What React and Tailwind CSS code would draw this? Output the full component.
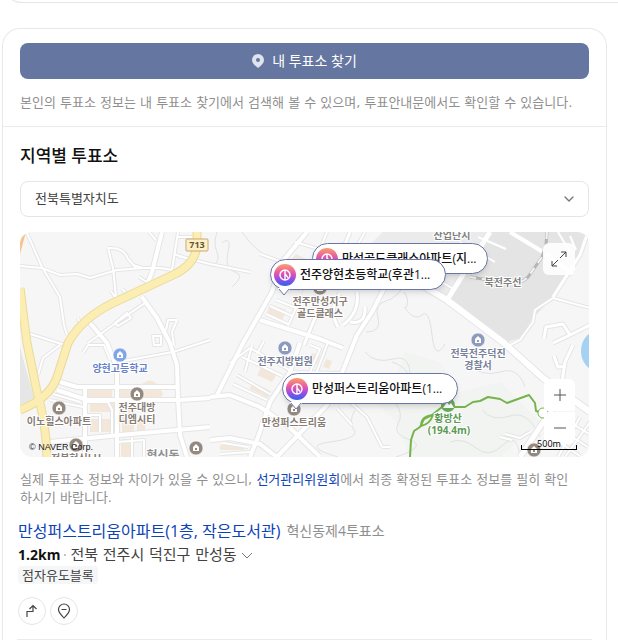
import { ChevronDown } from 'lucide-react';

// [path, width]
const roads = [
  ['M7 1 22 35 40 65 44 93 47 103', 2],
  ['M0 34 22 36 40 43 57 42 70 46 97 38 123 36 140 36 153 38', 2],
  ['M88 16Q104 15 108 27L116 36', 2],
  ['M88 16 93 36 96 65M91 59 97 68M102 57 112 66M119 45 130 52M113 33 123 36', 2],
  ['M142 0 132 40 127 53', 4],
  ['M129 0 136 8M158 0 152 38', 2],
  ['M158 24 190 32 230 40M158 5H182M154 22 166 26', 2],
  ['M122 65 137 86 150 111 157 133 158 166 160 203 167 225', 4],
  ['M125 71 100 88 68 111M95 91 107 81 111 86 98 94ZM58 86 62 96', 2],
  ['M70 91 87 111 97 136 97 225', 4],
  ['M157 88 152 100 154 113M157 88H148L146 98M133 104H141V113H134Z', 2],
  ['M7 101 45 113M40 113 23 126 18 143', 2],
  ['M40 150 57 155H157', 4],
  ['M37 158 67 168H160L190 166', 4],
  ['M30 168 63 175M33 162 60 170', 2],
  ['M65 153V225', 4],
  ['M30 210 100 203 190 195', 4],
  ['M98 130 153 120 190 108M68 113 63 121M68 113H84L90 128', 2],
  ['M67 183H80V200M67 170H88L92 178V202M112 206V225M98 210 124 208V225', 2],
  ['M287 0 262 30 252 60 223 111 207 143 197 163', 4],
  ['M262 30 240 22M275 10 330 26 345 0M307 0 290 42 280 60', 2],
  ['M300 20 330 32M330 0 318 30', 3],
  ['M240 88 268 97 300 107 323 116', 4],
  ['M297 61Q300 78 292 93L284 113M320 61Q308 78 318 95', 3],
  ['M337 60Q340 80 323 93M345 75Q346 93 330 90', 3],
  ['M370 45 352 80 337 103 322 141 307 173 257 225', 4],
  ['M190 165 210 163 240 175 267 193 300 225', 4],
  ['M190 208 210 206 240 212 257 225', 4],
  ['M280 111 270 140 250 170 238 205 230 225', 4],
  ['M210 131 230 116 273 140 320 141M222 125 262 144M217 143 250 162M213 152 247 168', 2],
  ['M250 74 272 84M246 82 268 92M256 68 276 76 268 94M290 113 300 117 290 140M308 110 296 142', 2],
  ['M232 113 225 140M244 109 237 122M203 211 228 215M200 222 230 220', 2],
  ['M330 170 347 185 362 215M317 176 332 193M362 215H370', 2],
  ['M470 0 427 68', 5],
  ['M490 0 523 20 553 42', 4],
  ['M458 5 486 17M440 10 475 30M405 40 435 58M420 25 450 42', 2],
  ['M568 0 560 23 533 65', 3],
  ['M570 76 533 66 515 78 513 90 500 108 490 113', 2],
  ['M570 93 550 103 533 111M550 103 543 92 526 95 524 106', 3],
  ['M538 0 550 20M550 4 556 18', 2],
  ['M340 15 390 46 427 68 484 111 523 146 570 180', 6],
  ['M553 113 545 130 542 150M534 124 538 135 546 134', 3],
  ['M540 165 520 195 500 225', 5],
  ['M570 190 545 225M560 185 538 225M536 195 568 215M530 204 560 224M543 186 569 202', 2],
  ['M485 202 500 206 510 200M480 205 492 208', 2],
];

const contours = [
  'M197 0Q193 12 197 20T192 35',
  'M202 11Q212 3 208 20T215 40T212 55',
  'M222 0Q230 12 238 18T250 27',
  'M390 45Q378 66 366 69T358 86T346 100',
  'M384 75Q395 90 402 83T412 103T425 112',
  'M345 120Q355 132 373 127T390 146T417 150',
  'M335 178Q328 190 334 198T310 210T318 225',
  'M372 130Q385 134 389 144T410 142',
  'M375 170Q384 182 378 192T390 208T376 225',
  'M445 130Q462 146 480 140T505 155',
  'M462 178Q472 190 490 184T520 205',
  'M430 210Q443 205 456 216T483 213T500 225',
  'M384 60Q390 68 386 76',
];

const blocks = [
  'M67 157H92V166H67Z',
  'M100 157H139Q145 160 141 166H100ZM122 152Q130 145 137 152Z',
  'M70 171H94V180H70ZM70 187H94V200H70Z',
  'M102 172H114V201H102ZM117 190H125V201H117Z',
  'M101 207H111V225H101Z',
  'M250 72 266 78 262 90 246 84Z',
  'M262 38 276 22 288 28 276 44Z',
  'M241 135 257 142 252 150 237 143ZM232 150 251 159 248 166 230 157Z',
  'M292 121 300 124 297 132 289 129ZM306 127 312 129 309 137 303 135Z',
  'M200 213H224V218H200Z',
];

const places = [
  { x: 100, y: 123, tone: '#82a5ea', ink: '#6681c9', lines: ['양현고등학교'] },
  { x: 117, y: 162, tone: '#948980', ink: '#877d76', lines: ['전주대방', '디엠시티'] },
  { x: 39, y: 176, tone: '#948980', ink: '#877d76', lines: ['이노힐스아파트'] },
  { x: 56, y: 213, tone: '#948980', ink: '#877d76', lines: ['전북혁신LH'] },
  { x: 176, y: 216, tone: '#948980', ink: '#877d76', lines: [] },
  { x: 300, y: 56, tone: '#948980', ink: '#877d76', lines: ['전주만성지구', '골드클래스'] },
  { x: 265, y: 116, tone: '#8d9abd', ink: '#788199', lines: ['전주지방법원'] },
  { x: 274, y: 177, tone: '#948980', ink: '#877d76', lines: ['만성퍼스트리움'] },
  { x: 458, y: 108, tone: '#8d9abd', ink: '#788199', lines: ['전북전주덕진', '경찰서'] },
  { x: 514, y: 218, tone: '#948980', ink: '#877d76', lines: [] },
];

const pins = [
  { label: '만성골드클래스아파트(지...', place: 'left-[292px] top-[11px]' },
  { label: '전주양현초등학교(후관1...', place: 'left-[250px] top-[27px]' },
  { label: '만성퍼스트리움아파트(1...', place: 'left-[262px] top-[141px]' },
];

const MapCanvas = () => (
  <svg
    className="block h-full w-full font-bold"
    viewBox="0 0 569 225"
    preserveAspectRatio="xMinYMin slice"
    aria-hidden="true"
  >
    <rect width="569" height="225" fill="#f6f6f6" />
    <path d="M0 115 4 130 14 166 0 173Z" fill="#e6e6e6" />
    <path d="M363 0H470L427 68 390 46 340 22Z" fill="#ebebeb" />
    <path d="M470 0H569L560 23 533 65 513 86 500 106 487 110 427 68Z" fill="#e4e4e4" />
    <path d="M385 120Q378 150 350 165L376 190 390 225H480L520 190 480 150 440 160 420 130Z" fill="#f1f4f0" />
    <ellipse cx="578" cy="119" rx="17" ry="20" fill="#a5d2f3" />
    {blocks.map((d) => (
      <path key={d} d={d} fill="#f3e7da" />
    ))}
    <g fill="none" stroke="#e0e1e0" strokeWidth="1">
      {contours.map((d) => (
        <path key={d} d={d} />
      ))}
    </g>

    {/* road casing first, then the white surface */}
    <g fill="none" stroke="#e5e5e5" strokeLinejoin="round">
      {roads.map(([d, w]) => (
        <path key={d} d={d} strokeWidth={w + 2} />
      ))}
    </g>
    <g fill="none" stroke="#fff" strokeLinejoin="round">
      {roads.map(([d, w]) => (
        <path key={d} d={d} strokeWidth={w} />
      ))}
    </g>

    {/* highways */}
    <path d="M0 0H6L0 22Z" fill="#f6c48c" />
    <g fill="none" strokeLinejoin="round">
      <g stroke="#e9da9c" strokeWidth="9">
        <path d="M177 0V14Q175 33 153 43L93 71Q62 86 48 111L37 145Q30 166 0 178" />
        <path d="M0 56 7 111 17 160Q26 190 27 225" />
      </g>
      <g stroke="#fcedb2" strokeWidth="7">
        <path d="M177 0V14Q175 33 153 43L93 71Q62 86 48 111L37 145Q30 166 0 178" />
        <path d="M0 56 7 111 17 160Q26 190 27 225" />
      </g>
    </g>
    <rect x="166" y="7" width="22" height="12" rx="1" fill="#fdf1c4" stroke="#c9a779" />
    <text x="177" y="16" textAnchor="middle" fontSize="9" fill="#6b5139">713</text>

    {/* railway */}
    <g fill="none">
      <path d="M527 0 526 13 522 25 508 45Q502 52 488 51L450 45" stroke="#b5b5b5" strokeWidth="3" />
      <path d="M527 0 526 13 522 25 508 45Q502 52 488 51L450 45" stroke="#f4f4f4" strokeWidth="2" strokeDasharray="7 6" />
    </g>

    {/* hiking trail */}
    <path
      d="M390 225 391 208 394 199 400 195 404 187 412 183 422 175 445 175 453 170 460 169 468 165 480 167 487 171 509 163 515 171 516 179 523 181M401 194Q401 184 413 183Q410 192 401 194"
      fill="none"
      stroke="#77b34c"
      strokeWidth="2"
      strokeLinejoin="round"
    />
    <circle cx="523" cy="181" r="5" fill="#fff" stroke="#77b34c" />
    <circle cx="428" cy="173" r="7" fill="#68ab5b" />
    <path d="M423 176 427 170 429 173 431 171 434 176Z" fill="#fff" />

    <g textAnchor="middle" stroke="#fff" strokeWidth="2" paintOrder="stroke" fontSize="10">
      <text x="428" y="190" fill="#5c9a53">황방산</text>
      <text x="429" y="202" fill="#5c9a53">(194.4m)</text>
      <text x="432" y="7" fill="#808080">산업단지</text>
      <text x="483" y="54" fill="#808080">북전주선</text>
      <text x="143" y="228" fill="#909090" fontSize="12">혁신동</text>
    </g>

    {places.map(({ x, y, tone, ink, lines }) => (
      <g key={`${x}-${y}`}>
        <circle cx={x} cy={y} r="7" fill={tone} stroke="#fff" strokeOpacity=".6" />
        <path d={`M${x - 3} ${y + 3}V${y - 1}L${x} ${y - 4}L${x + 3} ${y - 1}V${y + 3}Z`} fill="#fff" />
        <path d={`M${x - 1} ${y}h2v2h-2Z`} fill={tone} />
        {lines.map((line, i) => (
          <text
            key={line}
            x={x}
            y={y + 17 + i * 12}
            textAnchor="middle"
            fontSize="10"
            fill={ink}
            stroke="#fff"
            strokeWidth="2"
            paintOrder="stroke"
          >
            {line}
          </text>
        ))}
      </g>
    ))}
  </svg>
);

const StampIcon = () => (
  <svg viewBox="0 0 22 22" className="size-[22px] shrink-0" aria-hidden="true">
    <defs>
      <linearGradient id="stamp" x1="0" y1="0" x2="0" y2="1">
        <stop offset="0" stopColor="#f8a06a" />
        <stop offset=".4" stopColor="#e957a6" />
        <stop offset=".65" stopColor="#a64be0" />
        <stop offset="1" stopColor="#2f62f2" />
      </linearGradient>
    </defs>
    <circle cx="11" cy="11" r="11" fill="url(#stamp)" />
    <g fill="none" stroke="#fff" strokeWidth="1.4">
      <circle cx="11" cy="11" r="5" />
      <path d="M11 6V16M11 10 14 13.5" />
    </g>
  </svg>
);

const MapPinLabel = ({ label, place }) => (
  <button
    type="button"
    className={`absolute ${place} flex h-[31px] w-[176px] items-center gap-1 rounded-full border border-[#6a76a5] bg-white pl-[3px] text-xs font-medium whitespace-nowrap text-[#111] shadow-md`}
  >
    <StampIcon />
    {label}
    <svg viewBox="0 0 12 8" className="absolute top-[28px] left-[7px] h-2 w-3" aria-hidden="true">
      <path d="M0 0H12V1L6 7 0 1Z" fill="#fff" />
      <path d="M1 1 6 7 11 1" fill="none" stroke="#6a76a5" />
    </svg>
  </button>
);

const PollingMap = () => (
  <div className="relative mt-[15px] h-[225px] overflow-hidden rounded-xl">
    <MapCanvas />
    {pins.map((pin) => (
      <MapPinLabel key={pin.label} {...pin} />
    ))}
    <button
      type="button"
      aria-label="지도 확대"
      className="absolute top-[11px] right-[14px] flex size-8 items-center justify-center rounded-md bg-white/90 text-[#444]"
    >
      <svg viewBox="0 0 16 16" className="size-4" fill="none" stroke="currentColor" aria-hidden="true">
        <path d="M9 7 15 1M10 1H15V6M7 9 1 15M1 10V15H6" />
      </svg>
    </button>
    <div className="absolute right-[14px] bottom-[13px] flex flex-col gap-px text-[#555]">
      <button type="button" aria-label="확대" className="flex h-8 w-[31px] items-center justify-center rounded-t-md bg-white/95">
        <svg viewBox="0 0 12 12" className="size-3" stroke="currentColor" aria-hidden="true">
          <path d="M6 0V12M0 6H12" />
        </svg>
      </button>
      <button type="button" aria-label="축소" className="flex h-8 w-[31px] items-center justify-center rounded-b-md bg-white/95">
        <svg viewBox="0 0 12 12" className="size-3" stroke="currentColor" aria-hidden="true">
          <path d="M0 6H12" />
        </svg>
      </button>
    </div>
    <div className="absolute right-[12px] bottom-[7px] flex w-14 flex-col items-center text-[9px] leading-[10px] font-medium text-black">
      500m
      <span className="-mt-1 h-[5px] w-full border-x border-b border-black" />
    </div>
    <span className="absolute bottom-1 left-[9px] font-['Liberation_Sans',sans-serif] text-[9px] leading-3 text-[#222]">
      © NAVER Corp.
    </span>
  </div>
);

const App = () => {
  return (
    <div className="min-h-screen bg-white font-['Open_Sans','Noto_Sans_CJK_KR',sans-serif] text-[#424242]">
      {/* tail of the card above */}
      <div className="flex h-[3px] items-end overflow-hidden pl-[2px]">
        <div className="h-10 flex-1 rounded-bl-[20px] border-b border-l border-[#e5e5e5]" />
      </div>

      <section className="mt-[25px] mr-[11px] ml-[2px] rounded-t-[18px] border border-b-0 border-[#e8e8e8]">
        <div className="border-b border-[#ebebeb] px-[17px] pt-[14px] pb-[14px]">
          <button
            type="button"
            className="flex h-9 w-full items-center justify-center gap-2 rounded-lg bg-[#6576a1] text-sm text-white"
          >
            <svg viewBox="0 0 12 14" className="h-[14px] w-3" fill="#dfe4ee" aria-hidden="true">
              <path fillRule="evenodd" d="M6 0A6 6 0 0 1 12 6C12 9.500 8.500 12 6 14C3.500 12 0 9.500 0 6A6 6 0 0 1 6 0ZM6 4A2 2 0 1 0 6 8A2 2 0 1 0 6 4Z" />
            </svg>
            내 투표소 찾기
          </button>
          <p className="mt-[15px] font-['DejaVu_Sans','Noto_Sans_CJK_KR',sans-serif] text-[13px] leading-[18px] text-[#8f8f8f]">
            본인의 투표소 정보는 내 투표소 찾기에서 검색해 볼 수 있으며, 투표안내문에서도 확인할 수 있습니다.
          </p>
        </div>

        <div className="px-[17px] pt-[17px]">
          <h2 className="text-[17px] leading-6 font-medium text-[#111]">
            <label htmlFor="region">지역별 투표소</label>
          </h2>
          <div className="relative mt-[13px]">
            <select
              id="region"
              className="block h-9 w-full appearance-none rounded-lg border border-[#e5e5e5] bg-white px-[14px] text-[13px] text-[#424242]"
            >
              <option>전북특별자치도</option>
            </select>
            <ChevronDown className="pointer-events-none absolute top-[10px] right-3 size-4 text-[#777]" strokeWidth={2} />
          </div>

          <PollingMap />

          <p className="mt-[14px] pr-3 font-['DejaVu_Sans','Noto_Sans_CJK_KR',sans-serif] text-[13px] leading-[18px] text-[#8f8f8f]">
            실제 투표소 정보와 차이가 있을 수 있으니,{' '}
            <a href="#nec" className="text-[#0c43b7]">선거관리위원회</a>
            에서 최종 확정된 투표소 정보를 필히 확인하시기 바랍니다.
          </p>
        </div>

        <ul className="px-[14px] pt-3">
          <li className="border-b border-[#ebebeb] pb-[14px] pl-px">
            <div className="flex items-center gap-1.5 leading-6">
              <a href="#place" className="text-base leading-6 text-[#0c43b7]">만성퍼스트리움아파트(1층, 작은도서관)</a>
              <span className="text-sm leading-6 text-[#8f8f8f]">혁신동제4투표소</span>
            </div>
            <div className="mt-px flex items-center gap-1 text-[15px] leading-[22px]">
              <strong className="text-sm leading-[22px] text-[#111]">1.2km</strong>
              <span className="size-[2px] bg-[#c4c4c4]" />
              <button type="button" className="flex items-center gap-1 font-['DejaVu_Sans','Noto_Sans_CJK_KR',sans-serif]">
                전북 전주시 덕진구 만성동
                <svg viewBox="0 0 12 7" className="h-[7px] w-3" fill="none" stroke="#777" aria-hidden="true">
                  <path d="M1 1 6 6 11 1" />
                </svg>
              </button>
            </div>
            <span className="block w-fit rounded-sm bg-[#f5f6f8] px-1 text-[13px] leading-[18px]">점자유도블록</span>
            <div className="mt-[13px] flex gap-1">
              <button
                type="button"
                aria-label="길찾기"
                className="flex size-7 items-center justify-center rounded-full border border-[#e5e5e5]"
              >
                <svg viewBox="0 0 14 14" className="size-[14px]" fill="none" stroke="#444" strokeWidth="1.2" aria-hidden="true">
                  <path d="M2 13V7.500H8V1.500M4.500 5 8 1.500 11.500 5" />
                </svg>
              </button>
              <button
                type="button"
                aria-label="지도에서 보기"
                className="flex size-7 items-center justify-center rounded-full border border-[#e5e5e5]"
              >
                <svg viewBox="0 0 14 16" className="h-4 w-[14px]" fill="none" stroke="#444" strokeWidth="1.2" aria-hidden="true">
                  <path d="M7 1A5.500 5.500 0 0 1 12.500 6.500C12.500 10 9 12.500 7 15C5 12.500 1.500 10 1.500 6.500A5.500 5.500 0 0 1 7 1ZM4.500 6.500H9.500" />
                </svg>
              </button>
            </div>
          </li>
        </ul>
      </section>
    </div>
  );
};

export default App;
